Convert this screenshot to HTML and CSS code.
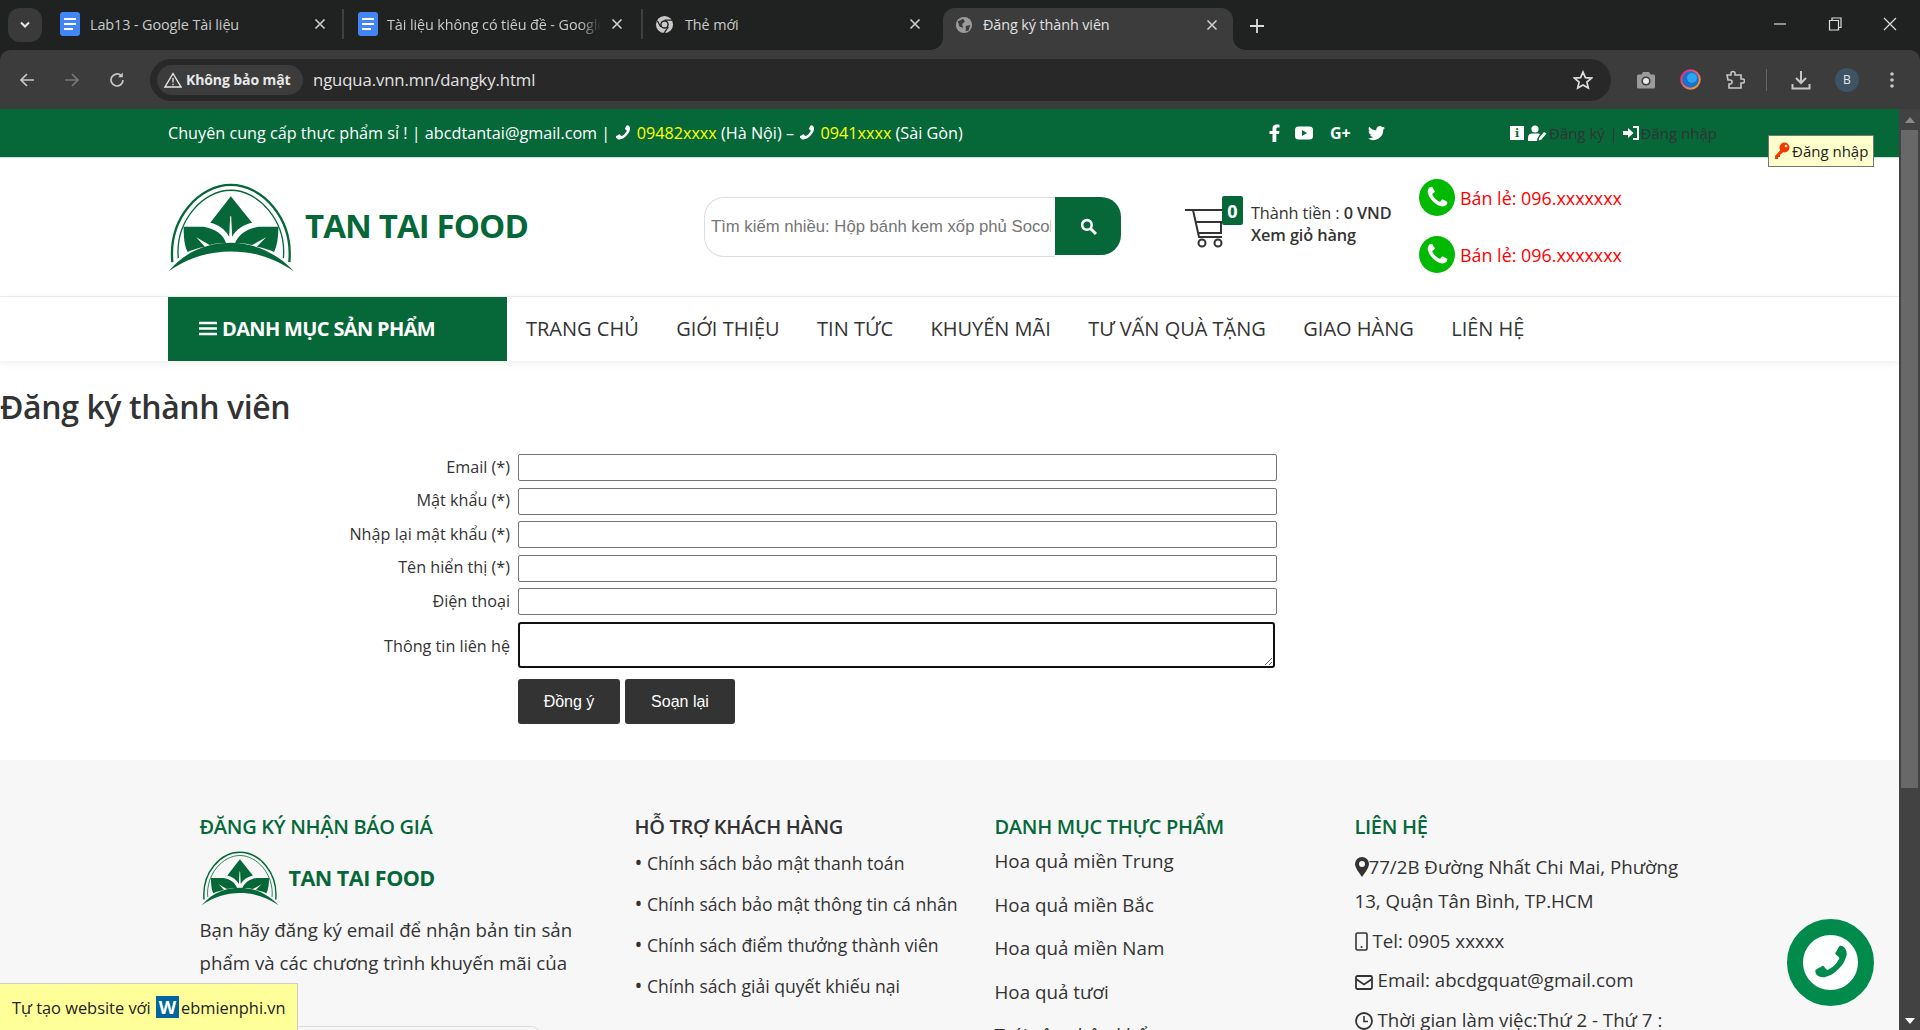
FILE: index.html
```html
<!DOCTYPE html>
<html lang="vi">
<head>
<meta charset="utf-8">
<title>Đăng ký thành viên</title>
<link rel="stylesheet" href="styles.css">
</head>
<body>
<svg class="defs" width="0" height="0" aria-hidden="true">
  <symbol id="logo" viewBox="20 15 385 275">
    <path d="M36 258C24 125 118 26 212 26C306 26 400 125 388 258" fill="none" stroke="currentColor" stroke-width="7"/>
    <path d="M54 246C44 135 128 42 212 42C296 42 380 135 370 246" fill="none" stroke="currentColor" stroke-width="4"/>
    <path d="M24 286C80 220 150 200 212 200C275 200 345 225 402 286C340 245 280 226 212 226C145 226 85 245 24 286Z" fill="currentColor"/>
    <path d="M212 60L276 140C250 146 228 160 216 182L213 120L210 120L207 182C195 160 175 146 150 140Z" fill="currentColor"/>
    <path d="M70 152L130 152C165 158 190 175 198 202C175 200 160 203 148 207L108 183L134 212C112 216 95 222 82 228C72 210 70 180 70 152Z" fill="currentColor"/>
    <path d="M355 152L295 152C260 158 235 175 224 202C247 200 262 203 276 207L318 183L290 212C312 216 330 222 342 228C352 210 355 180 355 152Z" fill="currentColor"/>
  </symbol>
  <symbol id="phone" viewBox="0 0 1792 1792">
    <path fill="currentColor" d="M1600 1240q0 27-10 70.5t-21 68.5q-21 50-122 106-94 51-186 51-27 0-53-3.5t-57.5-12.5-47-14.5-55.5-20.5-49-18q-98-35-175-83-127-79-264-216t-216-264q-48-77-83-175-3-9-18-49t-20.5-55.5-14.5-47-12.5-57.5-3.5-53q0-92 51-186 56-101 106-122 25-11 68.5-21t70.5-10q14 0 21 3 18 6 53 76 11 19 30 54t35 63.5 31 53.5q3 4 17.5 25t21.5 35.5 7 28.5q0 20-28.5 50t-62 55-62 53-28.5 46q0 9 5 22.5t8.5 20.5 14 24 11.5 19q76 137 174 235t235 174q2 1 19 11.5t24 14 20.5 8.5 22.5 5q18 0 46-28.5t53-62 55-62 50-28.5q14 0 28.5 7t35.5 21.5 25 17.5q25 15 53.5 31t63.5 35 54 30q70 35 76 53 3 7 3 21z"/>
  </symbol>
  <symbol id="doc" viewBox="0 0 20 24">
    <path fill="#4285f4" d="M3 0H17A3 3 0 0 1 20 3V21A3 3 0 0 1 17 24H3A3 3 0 0 1 0 21V3A3 3 0 0 1 3 0Z"/>
    <path fill="#fff" d="M4 6H16V8H4ZM4 11H16V13H4ZM4 16H13V18H4Z"/>
  </symbol>
  <symbol id="x" viewBox="0 0 12 12">
    <path d="M1.5 1.5L10.5 10.5M10.5 1.5L1.5 10.5" stroke="currentColor" stroke-width="1.6" fill="none"/>
  </symbol>
</svg>

<header class="browser">
  <div class="tabstrip">
    <div class="tab-menu"><svg width="12" height="8" viewBox="0 0 12 8"><path d="M2 1.5L6 5.5L10 1.5" stroke="#e8e8e8" stroke-width="2" fill="none"/></svg></div>
    <div class="tab tab-one"><svg class="favicon" width="20" height="24"><use href="#doc"/></svg><span class="tab-title">Lab13 - Google Tài liệu</span><svg class="tab-x" width="12" height="12"><use href="#x"/></svg></div>
    <div class="tab tab-two"><svg class="favicon" width="20" height="24"><use href="#doc"/></svg><span class="tab-title">Tài liệu không có tiêu đề - Google Tài liệu</span><svg class="tab-x" width="12" height="12"><use href="#x"/></svg></div>
    <div class="tab tab-three"><svg class="favicon" width="19" height="19" viewBox="0 0 20 20"><circle cx="10" cy="10" r="9" fill="#c9c9c9"/><circle cx="10" cy="10" r="4.5" fill="#202221"/><circle cx="10" cy="10" r="3" fill="#c9c9c9"/><path d="M10 5.5H18M6 12.5L2.5 6M14 12.5L9.5 19" stroke="#202221" stroke-width="1.3"/></svg><span class="tab-title">Thẻ mới</span><svg class="tab-x" width="12" height="12"><use href="#x"/></svg></div>
    <div class="tab tab-active"><svg class="favicon" width="18" height="18" viewBox="0 0 20 20"><circle cx="10" cy="10" r="9" fill="#9b9b9b"/><path d="M3 6L9 3L11 6L8 9L9 13L5 12ZM12 11L17 10L15 16L12 17Z" fill="#3c3c3c"/></svg><span class="tab-title">Đăng ký thành viên</span><svg class="tab-x" width="12" height="12"><use href="#x"/></svg></div>
    <svg class="new-tab" width="14" height="14" viewBox="0 0 14 14"><path d="M7 0V14M0 7H14" stroke="#dcdcdc" stroke-width="1.8"/></svg>
    <div class="win-controls">
      <svg width="14" height="14" viewBox="0 0 14 14"><path d="M1 7H13" stroke="#ddd" stroke-width="1.2"/></svg>
      <svg width="14" height="14" viewBox="0 0 14 14"><path d="M1.5 3.5H10.5V13H1.5ZM4 3.5V1H13V10.5H10.5" stroke="#ddd" stroke-width="1.2" fill="none"/></svg>
      <svg width="14" height="14" viewBox="0 0 14 14"><path d="M1 1L13 13M13 1L1 13" stroke="#ddd" stroke-width="1.2"/></svg>
    </div>
  </div>
  <div class="toolbar">
    <svg class="nav-ico" width="18" height="18" viewBox="0 0 18 18"><path d="M16 9H3M9 3L3 9L9 15" stroke="#c7c7c7" stroke-width="1.7" fill="none"/></svg>
    <svg class="nav-ico dim" width="18" height="18" viewBox="0 0 18 18"><path d="M2 9H15M9 3L15 9L9 15" stroke="#777" stroke-width="1.7" fill="none"/></svg>
    <svg class="nav-ico" width="18" height="18" viewBox="0 0 18 18"><path d="M15 9A6 6 0 1 1 13 4.5" stroke="#c7c7c7" stroke-width="1.7" fill="none"/><path d="M14.8 1.5V6.2H10.1Z" fill="#c7c7c7"/></svg>
    <div class="omnibox">
      <div class="chip"><svg width="18" height="16" viewBox="0 0 18 16"><path d="M9 1.5L17 15H1Z" stroke="#e8e8e8" stroke-width="1.4" fill="none"/><path d="M9 6V10.5M9 11.7V13.2" stroke="#e8e8e8" stroke-width="1.3"/></svg><span>Không bảo mật</span></div>
      <span class="url">nguqua.vnn.mn/dangky.html</span>
      <svg class="star" width="20" height="20" viewBox="0 0 20 20"><path d="M10 2L12.4 7.6L18.5 8.1L13.9 12.1L15.3 18L10 14.9L4.7 18L6.1 12.1L1.5 8.1L7.6 7.6Z" stroke="#dcdcdc" stroke-width="1.7" fill="none"/></svg>
    </div>
    <div class="ext-icons">
      <svg width="20" height="18" viewBox="0 0 20 18"><path d="M1 5A1.5 1.5 0 0 1 2.5 3.5H5.5L7 1H13L14.5 3.5H17.5A1.5 1.5 0 0 1 19 5V16A1.5 1.5 0 0 1 17.5 17.5H2.5A1.5 1.5 0 0 1 1 16Z" fill="#9b9b9b"/><circle cx="10" cy="10" r="4.6" fill="#3c3c3c"/><circle cx="10" cy="10" r="3" fill="#e8e8e8"/></svg>
      <svg width="21" height="21" viewBox="0 0 21 21"><defs><linearGradient id="orb" x1="0" y1="0" x2="1" y2="1"><stop offset="0" stop-color="#e0218a"/><stop offset="1" stop-color="#f4a92b"/></linearGradient></defs><circle cx="10.5" cy="10.5" r="9.3" fill="#1b6fd1" stroke="url(#orb)" stroke-width="2"/><circle cx="12" cy="9" r="5" fill="#29a6ee"/></svg>
      <svg width="20" height="20" viewBox="0 0 20 20"><path d="M2 5H6V3.5A2 2 0 0 1 10 3.5V5H16V9H17.5A2 2 0 0 1 17.5 13H16V18H4V14H5A2 2 0 0 0 5 10H3Z" stroke="#c7c7c7" stroke-width="1.6" fill="none"/></svg>
      <span class="ext-sep"></span>
      <svg width="20" height="20" viewBox="0 0 20 20"><path d="M10 1V12.5M5 8L10 13L15 8M1.5 14V18.5H18.5V14" stroke="#c7c7c7" stroke-width="2" fill="none"/></svg>
      <span class="avatar">B</span>
      <svg width="6" height="18" viewBox="0 0 6 18"><circle cx="3" cy="3" r="1.8" fill="#c7c7c7"/><circle cx="3" cy="9" r="1.8" fill="#c7c7c7"/><circle cx="3" cy="15" r="1.8" fill="#c7c7c7"/></svg>
    </div>
  </div>
</header>

<div class="viewport">
  <div class="page">
    <div class="topbar">
      <p class="top-text">Chuyên cung cấp thực phẩm sỉ ! | abcdtantai@gmail.com | <svg class="ico-inline flip" width="18" height="18"><use href="#phone"/></svg> <span class="hl">09482xxxx</span> (Hà Nội) – <svg class="ico-inline flip" width="18" height="18"><use href="#phone"/></svg> <span class="hl">0941xxxx</span> (Sài Gòn)</p>
      <div class="socials">
        <svg width="12" height="18" viewBox="0 0 12 18"><path fill="#fff" d="M3.5 18V10H0.5V7H3.5V4.5C3.5 1.8 5.2 0.5 7.5 0.5C8.6 0.5 9.7 0.6 10.5 0.7V3.5H8.8C7.5 3.5 7.3 4.1 7.3 5V7H10.4L10 10H7.3V18Z"/></svg>
        <svg width="18" height="14" viewBox="0 0 18 14"><rect y="0.5" width="18" height="13" rx="3.5" fill="#fff"/><path d="M7 4L12 7L7 10Z" fill="#066839"/></svg>
        <span class="gplus">G+</span>
        <svg width="17" height="15" viewBox="0 0 24 21"><path fill="#fff" d="M24 2.5a10 10 0 0 1-2.8 0.8a5 5 0 0 0 2.2-2.7a10 10 0 0 1-3.1 1.2a4.9 4.9 0 0 0-8.4 4.5a14 14 0 0 1-10.2-5.2a4.9 4.9 0 0 0 1.5 6.6a5 5 0 0 1-2.2-0.6a4.9 4.9 0 0 0 3.9 4.9a5 5 0 0 1-2.2 0.1a4.9 4.9 0 0 0 4.6 3.4a10 10 0 0 1-7.3 2a14 14 0 0 0 21.5-12.4a10 10 0 0 0 2.5-2.6z"/></svg>
      </div>
      <div class="auth">
        <span class="info">i</span>
        <svg width="19" height="16" viewBox="0 0 19 16"><circle cx="7" cy="4" r="3.6" fill="#fff"/><path fill="#fff" d="M0 16V12.5C0 10 2 8.5 4 8.5H10C11 8.5 11.5 8.8 12 9.3L9.5 13L9 16ZM11 13L16 7L18.5 8.5L13.5 14.5L10.8 15.5Z"/></svg>
        <span class="auth-link">Đăng ký</span>
        <span class="auth-sep">|</span>
        <svg width="16" height="14" viewBox="0 0 16 14"><path d="M0 5H5V2L10.5 7L5 12V9H0Z" fill="#fff"/><path d="M10 1H15V13H10" stroke="#fff" stroke-width="2" fill="none"/></svg>
        <span class="auth-link">Đăng nhập</span>
      </div>
    </div>

    <div class="masthead">
      <a class="brand">
        <svg class="brand-mark" width="128" height="92"><use href="#logo"/></svg>
        <span class="brand-name">TAN TAI FOOD</span>
      </a>
      <form class="search">
        <input class="search-input" type="text" placeholder="Tìm kiếm nhiều: Hộp bánh kem xốp phủ Socola">
        <button class="search-btn" type="button" aria-label="Tìm"><svg width="17" height="17" viewBox="0 0 16 16"><circle cx="6.5" cy="6.5" r="4.5" stroke="#fff" stroke-width="2.4" fill="none"/><path d="M10 10L15 15" stroke="#fff" stroke-width="2.8"/></svg></button>
      </form>
      <div class="cart">
        <div class="cart-ico">
          <svg width="44" height="42" viewBox="0 0 44 42"><path d="M1 4H9L15 31H38M12 16H40M37 17V27H14" stroke="#333" stroke-width="2" fill="none"/><path d="M8 4H40" stroke="#333" stroke-width="2"/><circle cx="18" cy="37" r="3.5" stroke="#333" stroke-width="2" fill="none"/><circle cx="34" cy="37" r="3.5" stroke="#333" stroke-width="2" fill="none"/></svg>
          <span class="cart-count">0</span>
        </div>
        <div class="cart-text">
          <div>Thành tiền : <b>0 VND</b></div>
          <div><b>Xem giỏ hàng</b></div>
        </div>
      </div>
      <div class="hotlines">
        <div class="hotline"><span class="hot-ico"><svg width="25" height="25"><use href="#phone"/></svg></span>Bán lẻ: 096.xxxxxxx</div>
        <div class="hotline"><span class="hot-ico"><svg width="25" height="25"><use href="#phone"/></svg></span>Bán lẻ: 096.xxxxxxx</div>
      </div>
    </div>

    <nav class="mainnav">
      <div class="cat-btn"><svg width="18" height="15" viewBox="0 0 18 15"><path d="M0 2H18M0 7.5H18M0 13H18" stroke="#fff" stroke-width="2.6"/></svg><span>DANH MỤC SẢN PHẨM</span></div>
      <ul class="nav-list">
        <li>TRANG CHỦ</li><li>GIỚI THIỆU</li><li>TIN TỨC</li><li>KHUYẾN MÃI</li><li>TƯ VẤN QUÀ TẶNG</li><li>GIAO HÀNG</li><li>LIÊN HỆ</li>
      </ul>
    </nav>

    <main class="content">
      <h1 class="title">Đăng ký thành viên</h1>
      <form class="reg-form">
        <label>Email (*)</label><input type="text">
        <label>Mật khẩu (*)</label><input type="text">
        <label>Nhập lại mật khẩu (*)</label><input type="text">
        <label>Tên hiển thị (*)</label><input type="text">
        <label>Điện thoại</label><input type="text">
        <label class="label-area">Thông tin liên hệ</label><textarea></textarea>
        <span></span>
        <div class="form-actions"><button type="button">Đồng ý</button><button type="button">Soạn lại</button></div>
      </form>
    </main>

    <footer class="footer">
      <section class="f-col">
        <h3 class="f-head">ĐĂNG KÝ NHẬN BÁO GIÁ</h3>
        <div class="f-brand"><svg class="brand-mark" width="80" height="56"><use href="#logo"/></svg><span class="f-brand-name">TAN TAI FOOD</span></div>
        <p class="f-para">Bạn hãy đăng ký email để nhận bản tin sản phẩm và các chương trình khuyến mãi của chúng tôi</p>
        <div class="f-sub"></div>
      </section>
      <section class="f-col">
        <h3 class="f-head dark">HỖ TRỢ KHÁCH HÀNG</h3>
        <ul class="f-support">
          <li>Chính sách bảo mật thanh toán</li>
          <li>Chính sách bảo mật thông tin cá nhân</li>
          <li>Chính sách điểm thưởng thành viên</li>
          <li>Chính sách giải quyết khiếu nại</li>
        </ul>
      </section>
      <section class="f-col">
        <h3 class="f-head">DANH MỤC THỰC PHẨM</h3>
        <ul class="f-cats">
          <li>Hoa quả miền Trung</li><li>Hoa quả miền Bắc</li><li>Hoa quả miền Nam</li><li>Hoa quả tươi</li><li>Trái cây nhập khẩu</li>
        </ul>
      </section>
      <section class="f-col">
        <h3 class="f-head">LIÊN HỆ</h3>
        <div class="f-contact">
          <p><svg width="14" height="20" viewBox="0 0 14 20"><path fill="#333" fill-rule="evenodd" d="M7 0A7 7 0 0 1 14 7C14 11 9 17 7 20C5 17 0 11 0 7A7 7 0 0 1 7 0ZM7 4A3 3 0 1 0 7 10A3 3 0 1 0 7 4Z"/></svg>77/2B Đường Nhất Chi Mai, Phường 13, Quận Tân Bình, TP.HCM</p>
          <p><svg class="gap" width="13" height="19" viewBox="0 0 13 19"><rect x="1" y="1" width="11" height="17" rx="1.5" stroke="#333" stroke-width="1.6" fill="none"/><circle cx="6.5" cy="15" r="1" fill="#333"/></svg>Tel: 0905 xxxxx</p>
          <p><svg class="gap" width="18" height="15" viewBox="0 0 18 15"><rect x="1" y="1" width="16" height="13" rx="1.5" stroke="#333" stroke-width="1.8" fill="none"/><path d="M1 4L9 9.5L17 4" stroke="#333" stroke-width="1.8" fill="none"/></svg>Email: abcdgquat@gmail.com</p>
          <p><svg class="gap" width="18" height="18" viewBox="0 0 18 18"><circle cx="9" cy="9" r="8" stroke="#333" stroke-width="1.8" fill="none"/><path d="M9 4V9.5H13" stroke="#333" stroke-width="1.6" fill="none"/></svg>Thời gian làm việc:Thứ 2 - Thứ 7 :</p>
        </div>
      </section>
    </footer>
  </div>
  <div class="scrollbar">
    <span class="arrow-up"></span>
    <span class="thumb"></span>
    <span class="arrow-down"></span>
  </div>

  <div class="tooltip"><svg width="16" height="18" viewBox="0 0 16 18"><circle cx="10.5" cy="5.5" r="5" fill="#f03a00"/><circle cx="12" cy="4" r="1.3" fill="#ffffcc"/><path d="M7.5 7L1 14V17H4V15H6V13L10 9.5Z" fill="#f03a00"/></svg>Đăng nhập</div>
  <div class="promo">Tự tạo website với <span class="promo-w">W</span><span class="promo-end">ebmienphi.vn</span></div>
  <div class="call"><svg class="flip" width="40" height="40"><use href="#phone"/></svg></div>
</div>
</body>
</html>
```
FILE: styles.css
```css
* { box-sizing: border-box; }
html, body { margin: 0; height: 100%; overflow: hidden; }
body { font-family: "Open Sans", "Noto Sans", sans-serif; color: #333; background: #fff; display: flex; flex-direction: column; width: 1920px; height: 1030px; }
.defs { position: absolute; }
.flip { transform: scaleX(-1); }
p, h1, h3, ul { margin: 0; padding: 0; }
ul { list-style: none; }

/* browser chrome */
.browser { height: 109px; flex: none; background: #202221; }
.tabstrip { height: 50px; display: flex; align-items: flex-end; position: relative; color: #c9c9c9; font-size: 14.4px; }
.tab-menu { width: 34px; height: 34px; margin: 0 0 8px 8px; border-radius: 12px; background: #3a3a3a; display: flex; align-items: center; justify-content: center; flex: none; }
.tab { display: flex; align-items: center; flex: none; position: relative; height: 30px; margin-bottom: 11px; }
.tab-title { flex: 1; white-space: nowrap; overflow: hidden; letter-spacing: -0.1px; }
.tab-x { color: #d0d0d0; flex: none; }
.tab-one { width: 300px; padding: 0 16px 0 18px; }
.tab-one .tab-title { margin-left: 10px; }
.tab-two { width: 299px; padding: 0 18px 0 14px; border-left: 2px solid #3f3f3f; }
.tab-two .tab-title { margin: 0 10px 0 9px; -webkit-mask-image: linear-gradient(90deg, #000 90%, transparent); mask-image: linear-gradient(90deg, #000 90%, transparent); }
.tab-three { width: 302px; padding: 0 22px 0 12px; border-left: 2px solid #3f3f3f; }
.tab-three .tab-title { margin-left: 11px; }
.tab-active { width: 290px; height: 42px; margin-bottom: 0; padding: 0 15px 9px 12px; background: #3c3c3c; border-radius: 12px 12px 0 0; color: #e0e0e0; }
.tab-active .tab-title { margin-left: 10px; }
.tab-active::before, .tab-active::after { content: ""; position: absolute; bottom: 0; width: 12px; height: 12px; }
.tab-active::before { left: -12px; background: radial-gradient(circle at 0 0, #202221 11.5px, #3c3c3c 12px); }
.tab-active::after { right: -12px; background: radial-gradient(circle at 100% 0, #202221 11.5px, #3c3c3c 12px); }
.new-tab { margin: 0 0 17px 17px; flex: none; }
.win-controls { margin-left: auto; display: flex; gap: 41px; padding: 0 23px 19px 0; }

.toolbar { height: 59px; background: #3c3c3c; display: flex; align-items: center; padding: 0 0 0 18px; border-radius: 10px 10px 0 0; }
.nav-ico { margin-right: 27px; flex: none; }
.omnibox { width: 1461px; height: 42px; margin-left: -3px; background: #282828; border-radius: 21px; display: flex; align-items: center; padding: 0 18px 0 7px; flex: none; }
.chip { width: 146px; height: 30px; background: #3c3c3c; border-radius: 15px; display: flex; align-items: center; gap: 4px; padding-left: 7px; color: #e8e8e8; font-size: 14px; font-weight: 700; white-space: nowrap; letter-spacing: -0.1px; }
.url { margin-left: 10px; color: #e2e2e2; font-size: 16.7px; letter-spacing: -0.1px; }
.star { margin-left: auto; }
.ext-icons { display: flex; align-items: center; margin-left: 25px; gap: 24px; }
.ext-sep { width: 1px; height: 22px; background: #666; margin-left: -3px; }
.avatar { width: 24px; height: 24px; margin-right: 6px; border-radius: 50%; background: #3e5464; color: #e8e8e8; font-size: 12px; display: flex; align-items: center; justify-content: center; }

/* viewport */
.viewport { flex: 1; display: flex; position: relative; overflow: hidden; min-height: 0; }
.page { flex: 1; min-width: 0; overflow: hidden; }
.scrollbar { width: 21px; flex: none; background: #424242; display: flex; flex-direction: column; align-items: center; padding: 8px 0 6px; }
.arrow-up { width: 0; height: 0; border: 5px solid transparent; border-top: 0; border-bottom: 6px solid #8a8a8a; }
.arrow-down { width: 0; height: 0; border: 5px solid transparent; border-bottom: 0; border-top: 6px solid #fff; margin-top: auto; }
.thumb { width: 17px; height: 658px; margin-top: 7px; background: #686868; }

/* top bar */
.topbar { height: 49px; background: #066839; color: #fff; display: flex; align-items: center; padding-left: 168px; border-bottom: 1px solid #cfe0d6; }
.top-text { width: 1101px; font-size: 16.2px; white-space: nowrap; }
.ico-inline { vertical-align: -3px; }
.hl { color: #ffff00; }
.socials { display: flex; align-items: center; gap: 14px; width: 241px; }
.gplus { color: #fff; font-weight: 700; font-size: 16px; width: 24px; margin-left: 3px; }
.auth { display: flex; align-items: center; gap: 2px; font-size: 15px; color: #333; }
.info { width: 14px; height: 14px; background: #fff; color: #066839; font: 700 11px "DejaVu Serif", serif; display: flex; align-items: center; justify-content: center; margin-right: 2px; }
.auth-link { color: #333; }
.auth-sep { margin: 0 3px; color: #333; font-size: 14px; }

/* masthead */
.masthead { height: 139px; display: flex; align-items: flex-start; padding-left: 168px; border-bottom: 1px solid #eee; }
.brand { width: 536px; display: flex; align-items: flex-start; color: #066839; flex: none; padding-top: 23px; }
.brand-mark { color: #066839; flex: none; }
.brand > .brand-mark { margin-left: -1px; }
.brand-name { font-weight: 700; font-size: 33px; letter-spacing: -0.9px; margin: 21px 0 0 10px; line-height: 48px; white-space: nowrap; }
.search { width: 417px; height: 58px; margin-top: 39px; display: flex; flex: none; }
.search-input { width: 351px; height: 60px; border: 1px solid #ddd; border-right: 0; border-radius: 20px 0 0 20px; padding: 0 4px 0 6px; font: 16.7px "Liberation Sans", sans-serif; background: #fff; outline: 0; }
.search-input::placeholder { color: #757575; opacity: 1; }
.search-btn { width: 66px; height: 58px; border: 0; background: #066839; border-radius: 0 20px 20px 0; display: flex; align-items: center; justify-content: center; padding: 0; }
.cart { display: flex; margin: 38px 0 0 63px; width: 236px; flex: none; }
.cart-ico { width: 67px; height: 60px; position: relative; padding-top: 10px; flex: none; }
.cart-count { position: absolute; left: 38px; top: 0; width: 21px; height: 29px; background: #066839; color: #fff; font-weight: 700; font-size: 18px; display: flex; align-items: center; justify-content: center; border-radius: 2px; }
.cart-text { font-size: 16.3px; line-height: 22px; padding-top: 6px; white-space: nowrap; letter-spacing: -0.1px; }
.cart-text b { font-weight: 600; }
.hotlines { display: flex; flex-direction: column; gap: 20px; margin-top: 21px; }
.hotline { display: flex; align-items: center; color: #f00; font-size: 17.9px; height: 37px; white-space: nowrap; margin-left: -1px; }
.hot-ico { width: 36px; height: 37px; border-radius: 50%; background: #00b900; color: #fff; display: flex; align-items: center; justify-content: center; margin-right: 5px; }

/* nav */
.mainnav { height: 64px; display: flex; padding-left: 168px; position: relative; box-shadow: 0 2px 8px rgba(0,0,0,.07); }
.cat-btn { width: 339px; background: #066839; color: #fff; display: flex; align-items: center; gap: 5px; padding: 0 0 1px 31px; font-weight: 700; font-size: 20px; white-space: nowrap; letter-spacing: -0.65px; }
.nav-list { display: flex; align-items: center; gap: 37.4px; padding: 0 0 2px 19px; font-size: 20px; color: #333; white-space: nowrap; }

/* content */
.content { height: 399px; padding-top: 24px; }
.title { font-size: 32px; font-weight: 600; letter-spacing: -0.4px; line-height: 44px; color: #333; margin-bottom: 25px; }
.reg-form { display: grid; grid-template-columns: 510px 759px; grid-template-rows: repeat(5, 27px) 46px 45px; column-gap: 8px; row-gap: 6.5px; font-size: 16.2px; align-items: center; }
.reg-form label { text-align: right; padding-bottom: 2px; }
.reg-form .label-area { padding: 3px 0 0; }
.reg-form input { width: 759px; height: 27px; border: 1px solid #767676; border-radius: 2px; background: #fff; padding: 0; }
.reg-form textarea { display: block; width: 757px; height: 46px; border: 2px solid #101010; border-radius: 3px; background: #fff; margin: 0; }
.form-actions { display: flex; gap: 5px; margin-top: 5px; align-self: start; }
.form-actions button { height: 45px; width: 102px; border: 0; border-radius: 3px; background: #333; color: #fff; font: 16px "Liberation Sans", sans-serif; }
.form-actions button + button { width: 110px; }

/* footer */
.footer { background: #f7f7f7; padding: 51px 0 0 199.5px; height: 400px; display: grid; grid-template-columns: 435px 360px 360px 330px; }
.f-head { font-size: 20px; font-weight: 600; color: #066839; line-height: 32px; white-space: nowrap; letter-spacing: -0.3px; }
.f-head.dark { color: #333; }
.f-brand { display: flex; align-items: center; margin-top: 7px; }
.f-brand-name { font-weight: 700; font-size: 21.5px; color: #066839; margin-left: 9px; letter-spacing: -0.5px; white-space: nowrap; padding-bottom: 2px; }
.f-para { width: 390px; font-size: 18.7px; line-height: 33px; margin-top: 7px; }
.f-sub { width: 340px; height: 30px; margin-top: 14px; border: 1px solid #ddd; border-radius: 8px; }
.f-support { margin-top: 0; font-size: 17.6px; line-height: 41px; white-space: nowrap; }
.f-support li::before { content: "•"; display: inline-block; width: 12.5px; font-size: 21px; line-height: 1; }
.f-cats { font-size: 18.8px; line-height: 43.5px; margin-top: -3px; white-space: nowrap; }
.f-contact { font-size: 18.7px; margin-top: 7px; }
.f-contact p { line-height: 34px; margin-bottom: 5.5px; }
.f-contact svg { vertical-align: -3px; }
.f-contact .gap { margin-right: 5px; }

/* overlays */
.tooltip { position: absolute; left: 1768px; top: 26px; height: 32px; padding: 0 5px; background: #ffffcc; border: 1px solid #767676; color: #222; font-size: 15px; display: flex; align-items: center; gap: 2px; white-space: nowrap; }
.promo { position: absolute; left: 0; bottom: 0; width: 298px; height: 47px; background: #ffff99; border: 1px solid #ccc; border-left: 0; border-bottom: 0; display: flex; align-items: center; padding-left: 12px; font-size: 16.4px; color: #222; white-space: pre; }
.promo-w { width: 23px; height: 22px; background: #00659f; color: #fff; font-weight: 700; font-size: 18px; display: flex; align-items: center; justify-content: center; margin: 0 2px 0 1px; }
.call { position: absolute; left: 1787px; top: 810px; width: 87px; height: 87px; border-radius: 50%; background: #fff; border: 16px solid #008a4b; color: #008a4b; display: flex; align-items: center; justify-content: center; }
```
